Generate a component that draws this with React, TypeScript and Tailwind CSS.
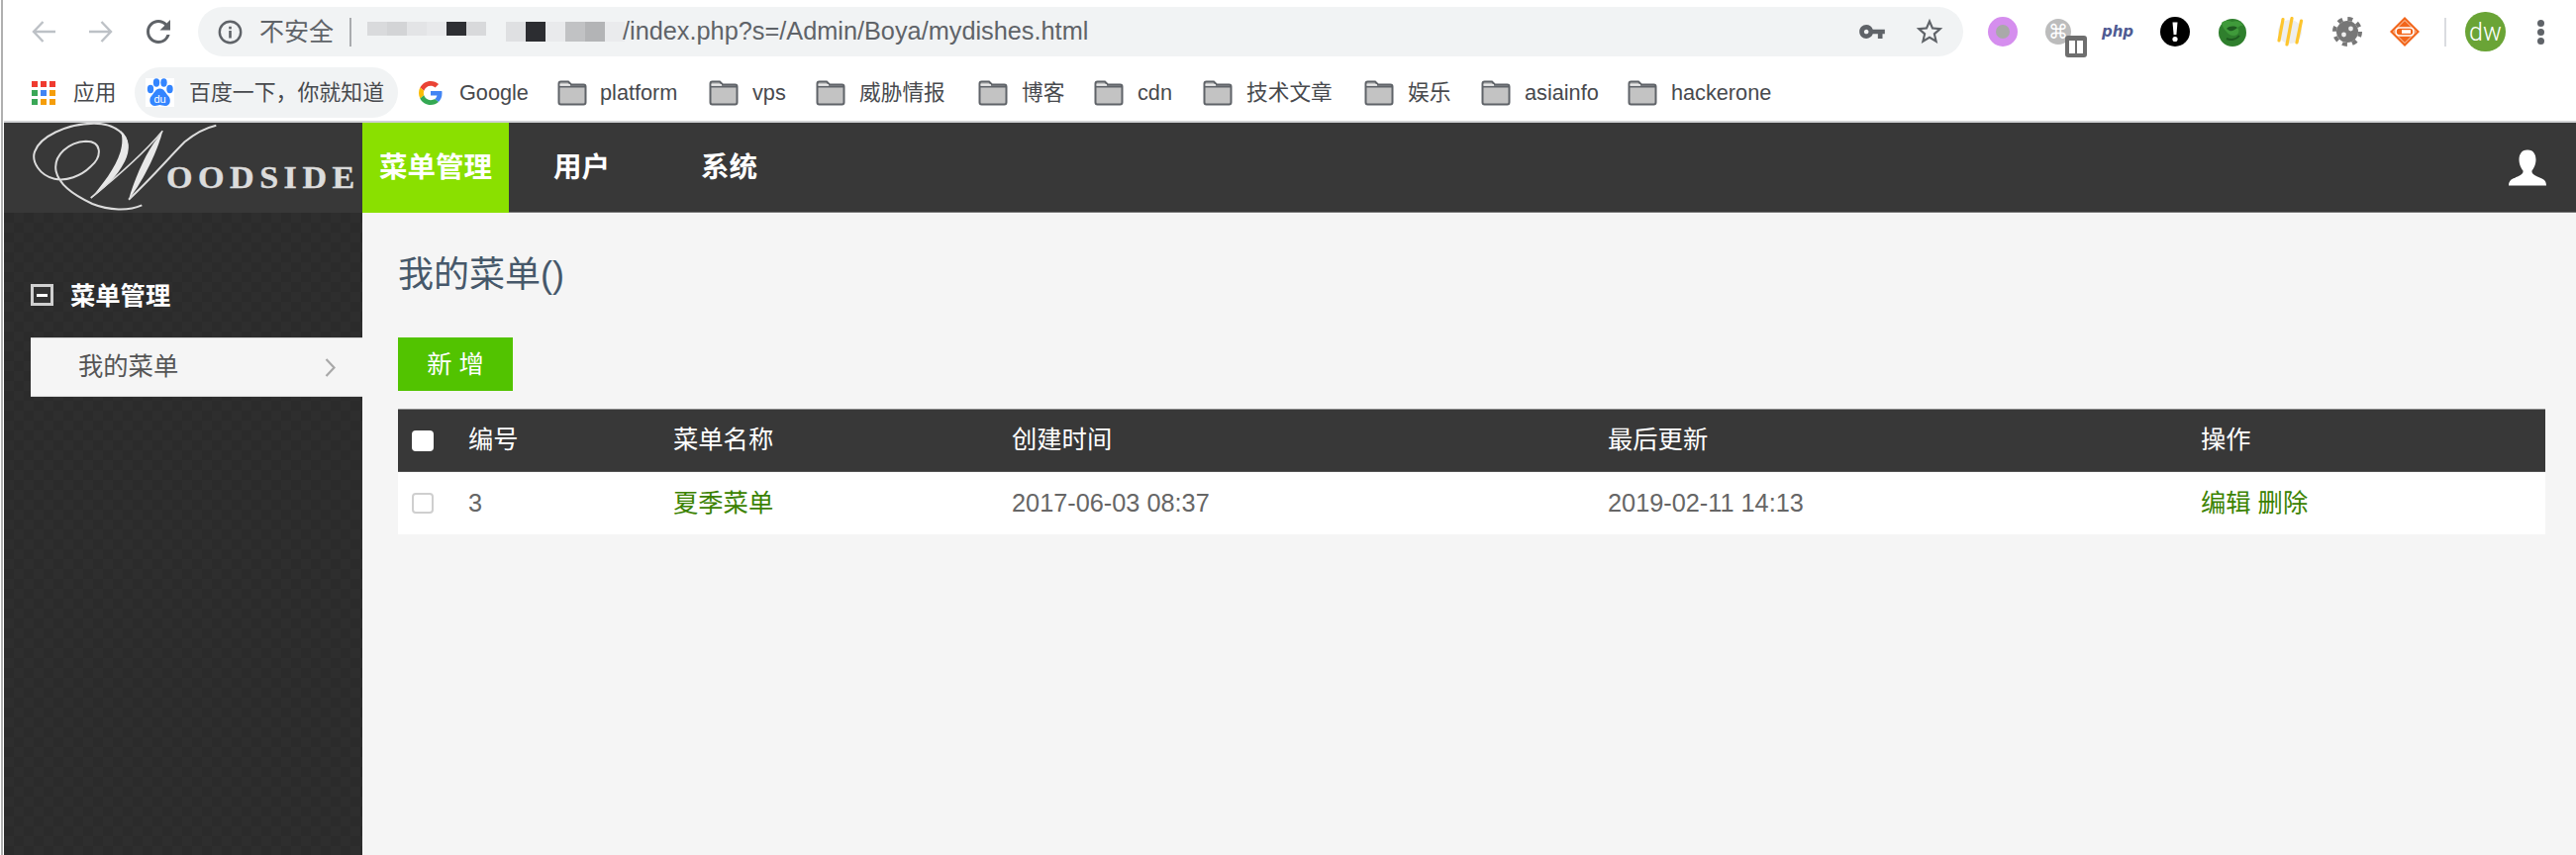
import React from "react";

const Folder = () => (
  <svg width="30" height="26" viewBox="0 0 30 26" className="shrink-0">
    <path d="M1.5 3.5Q1.5 1.5 3.5 1.5H11L14 4.5H26.5Q28.5 4.5 28.5 6.5V22.5Q28.5 24.5 26.5 24.5H3.5Q1.5 24.5 1.5 22.5Z" fill="#c3c3c3" stroke="#5f6368" strokeWidth="2" />
    <path d="M2 6.5H28" stroke="#5f6368" strokeWidth="2" fill="none" />
    <path d="M2.5 5H13" stroke="#f4f4f4" strokeWidth="1.5" fill="none" />
  </svg>
);

const AppsIcon = () => {
  const colors = ["#ef3b30", "#ef3b30", "#ef3b30", "#3aa757", "#4285f4", "#f59e0b", "#3aa757", "#f59e0b", "#f59e0b"];
  return (
    <div className="grid w-[24px] shrink-0 grid-cols-[6px_6px_6px] gap-[3px]">
      {colors.map((c, i) => (
        <div key={i} className="h-[6px] w-[6px]" style={{ backgroundColor: c }} />
      ))}
    </div>
  );
};

const BaiduIcon = () => (
  <div className="flex h-[29px] w-[29px] shrink-0 items-center justify-center bg-white">
    <svg width="27" height="29" viewBox="0 0 27 29">
      <ellipse cx="4" cy="11" rx="3.2" ry="4.2" fill="#3385ff" />
      <ellipse cx="10" cy="4.5" rx="3.2" ry="4.2" fill="#3385ff" />
      <ellipse cx="17.5" cy="4.5" rx="3.2" ry="4.2" fill="#3385ff" />
      <ellipse cx="23.5" cy="11" rx="3.2" ry="4.2" fill="#3385ff" />
      <path d="M13.5 10.5C9 10.5 8 15 5 18C2 21 3 28 8.5 28C11 28 12 27 13.5 27C15 27 16.5 28 19 28C24.5 28 25 21 22 18C19 15 18 10.5 13.5 10.5Z" fill="#3385ff" />
      <text x="13.5" y="24.5" textAnchor="middle" fontSize="11" fill="#fff" fontFamily="Liberation Sans, sans-serif">du</text>
    </svg>
  </div>
);

const GoogleIcon = () => (
  <svg width="24" height="24" viewBox="0 0 48 48" className="shrink-0">
    <path fill="#EA4335" d="M24 9.5c3.5 0 6.7 1.2 9.2 3.6l6.9-6.9C35.9 2.4 30.5 0 24 0 14.6 0 6.5 5.4 2.6 13.2l8 6.2C12.4 13.7 17.7 9.5 24 9.5z" />
    <path fill="#4285F4" d="M47 24.5c0-1.6-.1-3.1-.4-4.5H24v9h12.9c-.6 3-2.2 5.5-4.7 7.2l7.7 6C44.4 38 47 31.8 47 24.5z" />
    <path fill="#FBBC05" d="M10.5 28.6c-.5-1.4-.8-3-.8-4.6s.3-3.2.8-4.6l-8-6.2C.9 16.5 0 20.1 0 24s.9 7.5 2.6 10.8l7.9-6.2z" />
    <path fill="#34A853" d="M24 48c6.5 0 11.9-2.1 15.9-5.8l-7.7-6c-2.2 1.4-4.9 2.3-8.2 2.3-6.3 0-11.6-4.2-13.5-9.9l-7.9 6.2C6.5 42.6 14.6 48 24 48z" />
  </svg>
);

const WoodsideLogo = () => (
  <svg width="362" height="91" viewBox="0 0 362 91" className="shrink-0">
    <g transform="translate(16,-4) scale(0.3333)" fill="none" stroke="#dcdcdc" strokeWidth="6">
      <path d="M370,262 C330,280 270,278 220,258 C170,235 120,205 110,160 C100,110 150,70 200,68 C250,68 250,115 215,145 C185,175 140,190 105,182 C60,172 35,130 45,100 C60,55 140,15 225,14 C290,14 330,50 325,90" />
      <path d="M305,35 C335,60 335,95 318,130 C295,175 255,215 215,242 C250,200 290,150 305,100 C312,75 312,55 305,35 Z" fill="#e8e8e8" stroke="none" />
      <path d="M215,240 C290,180 380,100 433,37" strokeWidth="5" />
      <path d="M433,37 C420,90 380,180 330,245 C345,190 375,120 405,75 Z" fill="#e8e8e8" stroke="none" />
      <path d="M330,245 C400,180 450,120 500,70 C530,45 560,28 595,20" strokeWidth="6" />
    </g>
    <text transform="translate(164,66) scale(1.1,1)" fontSize="31" letterSpacing="5" fill="#dcdcdc" stroke="#dcdcdc" strokeWidth="0.4" fontFamily="Liberation Serif, serif">OODSIDE</text>
  </svg>
);

const ExtSlot = ({ children }: { children: React.ReactNode }) => (
  <div className="relative flex h-[30px] w-[58px] shrink-0 items-center justify-center">{children}</div>
);

const bookmarks = [
  { label: "vps", w: "w-[35px]" },
  { label: "威胁情报", w: "w-[91px]" },
  { label: "博客", w: "w-[44px]" },
  { label: "cdn", w: "w-[37px]" },
  { label: "技术文章", w: "w-[90px]" },
  { label: "娱乐", w: "w-[45px]" },
  { label: "asiainfo", w: "w-[75px]" },
  { label: "hackerone", w: "w-[101px]" },
];

const mosaicA = ["bg-[#d9dadc]", "bg-[#d3d4d6]", "bg-[#e3e4e6]", "bg-[#e8e9eb]", "bg-[#2e2f33]", "bg-[#d8d9db]"];
const mosaicB = ["bg-[#dfe0e2]", "bg-[#2c2d31]", "bg-[#e9eaec]", "bg-[#c1c2c4]", "bg-[#b3b4b6]", "bg-[#eaebed]"];

export default function App() {
  return (
    <div className="flex h-[864px] w-[2602px] overflow-hidden bg-white font-['Liberation_Sans','Noto_Sans_CJK_SC',sans-serif]">
      <div className="w-[4px] shrink-0 bg-white">
        <div className="ml-[1px] h-full w-[2px] bg-[#b0b0b0]" />
      </div>
      <div className="flex min-w-0 flex-1 flex-col">
        {/* browser toolbar */}
        <div className="flex h-[62px] shrink-0 items-start pl-[28px] pt-[7px]">
          <div className="flex h-[50px] w-[168px] shrink-0 items-center">
            <svg width="24" height="24" viewBox="0 0 24 24" fill="none" stroke="#bdc1c6" strokeWidth="2.4">
              <path d="M24 12H2M11.5 2L2 12l9.5 10" />
            </svg>
            <svg width="24" height="24" viewBox="0 0 24 24" fill="none" stroke="#bdc1c6" strokeWidth="2.4" className="ml-[34px]">
              <path d="M0 12H22M12.5 2L22 12l-9.5 10" />
            </svg>
            <svg width="36" height="36" viewBox="0 0 24 24" fill="#5f6368" className="ml-[28px]">
              <path d="M17.65 6.35A7.958 7.958 0 0 0 12 4c-4.42 0-7.99 3.58-7.99 8s3.57 8 7.99 8c3.73 0 6.84-2.55 7.73-6h-2.08A5.99 5.99 0 0 1 12 18c-3.31 0-6-2.69-6-6s2.69-6 6-6c1.66 0 3.14.69 4.22 1.78L13 11h7V4l-2.35 2.35z" />
            </svg>
          </div>
          <div className="flex h-[50px] w-[1783px] shrink-0 items-center rounded-full bg-[#f1f3f4] pl-[20px] pr-[18px]">
            <svg width="25" height="25" viewBox="0 0 25 25" fill="none" className="shrink-0">
              <circle cx="12.5" cy="12.5" r="10.7" stroke="#5f6368" strokeWidth="2.4" />
              <rect x="11.2" y="11" width="2.6" height="7.5" fill="#5f6368" />
              <rect x="11.2" y="6.8" width="2.6" height="2.6" fill="#5f6368" />
            </svg>
            <span className="ml-[17px] w-[76px] shrink-0 whitespace-nowrap text-[25px] leading-none text-[#5f6368]">不安全</span>
            <div className="ml-[15px] h-[29px] w-[2px] shrink-0 bg-[#a9abae]" />
            <div className="ml-[16px] flex h-[20px] w-[260px] shrink-0 items-start">
              <div className="flex h-[14px]">
                {mosaicA.map((c) => (
                  <div key={c} className={`h-full w-[20px] ${c}`} />
                ))}
              </div>
              <div className="ml-[20px] flex h-[20px]">
                {mosaicB.map((c) => (
                  <div key={c} className={`h-full w-[20px] ${c}`} />
                ))}
              </div>
            </div>
            <span className="-ml-[2px] whitespace-nowrap text-[25.3px] leading-none text-[#5f6368]">/index.php?s=/Admin/Boya/mydishes.html</span>
            <div className="flex-1" />
            <svg width="28" height="28" viewBox="0 0 24 24" fill="#5f6368" className="shrink-0">
              <path d="M12.65 10C11.83 7.67 9.61 6 7 6c-3.31 0-6 2.69-6 6s2.69 6 6 6c2.61 0 4.83-1.67 5.65-4H17v4h4v-4h2v-4H12.65zM7 14c-1.1 0-2-.9-2-2s.9-2 2-2 2 .9 2 2-.9 2-2 2z" />
            </svg>
            <svg width="32" height="32" viewBox="0 0 24 24" fill="#5f6368" className="ml-[28px] shrink-0">
              <path d="M22 9.24l-7.19-.62L12 2 9.19 8.63 2 9.24l5.46 4.73L5.82 21 12 17.27 18.18 21l-1.63-7.03L22 9.24zM12 15.4l-3.76 2.27 1-4.28-3.32-2.88 4.38-.38L12 6.1l1.71 4.04 4.38.38-3.32 2.88 1 4.28L12 15.4z" />
            </svg>
          </div>
          <div className="ml-[11px] flex h-[50px] shrink-0 items-center">
            <ExtSlot>
              <div className="flex h-[30px] w-[30px] items-center justify-center rounded-full bg-[#d58eee]">
                <div className="h-[14px] w-[14px] rounded-full bg-[#a9a9a9]" />
              </div>
            </ExtSlot>
            <ExtSlot>
              <div className="flex h-[26px] w-[26px] -translate-x-[2px] items-center justify-center rounded-full bg-[#bcbcbc] font-['DejaVu_Sans',sans-serif] text-[20px] leading-none text-white">⌘</div>
              <div className="absolute left-[34px] top-[19px] flex h-[22px] w-[22px] items-center justify-center gap-[2px] rounded-[3px] bg-[#6e6e6e]">
                <div className="h-[13px] w-[6px] bg-white" />
                <div className="h-[13px] w-[6px] bg-white" />
              </div>
            </ExtSlot>
            <ExtSlot>
              <span className="font-['DejaVu_Sans',sans-serif] text-[15px] font-bold italic leading-none text-[#4f5b93]">php</span>
            </ExtSlot>
            <ExtSlot>
              <svg width="30" height="30" viewBox="0 0 30 30">
                <circle cx="15" cy="15" r="15" fill="#000" />
                <path d="M12.5 5.5h5L16.4 18h-2.8z" fill="#fff" />
                <circle cx="15" cy="22.5" r="2.6" fill="#fff" />
              </svg>
            </ExtSlot>
            <ExtSlot>
              <svg width="30" height="30" viewBox="0 0 30 30">
                <circle cx="15" cy="16" r="14" fill="#2f7f2d" />
                <path d="M4 6C7 3 12 4 15 5C19 3 24 5 26 9C23 8 22 10 20 11C23 14 21 19 16 19C12 19 10 16 8 14C6 12 5 10 4 6Z" fill="#3f9a3a" />
                <path d="M9 12C12 9 17 9 20 11C17 13 15 15 12 14Z" fill="#1e5a20" />
                <path d="M9 22C13 24 19 23 22 19" stroke="#1e5a20" strokeWidth="2" fill="none" />
              </svg>
            </ExtSlot>
            <ExtSlot>
              <svg width="26" height="30" viewBox="0 0 26 30">
                <circle cx="13" cy="15" r="12" fill="#eeeeee" />
                <path d="M6 2.5L2 24" stroke="#fdc52e" strokeWidth="3.2" strokeLinecap="round" />
                <path d="M15 1.5L10 28" stroke="#fdc52e" strokeWidth="3.2" strokeLinecap="round" />
                <path d="M24.5 4L20 26" stroke="#fdc52e" strokeWidth="3.2" strokeLinecap="round" />
              </svg>
            </ExtSlot>
            <ExtSlot>
              <svg width="30" height="30" viewBox="0 0 30 30">
                <circle cx="15" cy="15" r="11" fill="#777" />
                <circle cx="15" cy="15" r="13" fill="none" stroke="#777" strokeWidth="4" strokeDasharray="5 5.2" />
                <circle cx="11.5" cy="18" r="2.4" fill="#eee" />
                <circle cx="18.5" cy="12" r="2.4" fill="#eee" />
              </svg>
            </ExtSlot>
            <ExtSlot>
              <svg width="30" height="30" viewBox="0 0 30 30">
                <path d="M15 0L30 15L15 30L0 15Z" fill="#f2651a" />
                <path d="M15 3.5L26.5 15L15 26.5L3.5 15Z" fill="none" stroke="#fbd6bd" strokeWidth="1" />
                <rect x="6" y="11" width="18" height="8" rx="4" fill="none" stroke="#fff" strokeWidth="1.6" />
                <rect x="12" y="13.2" width="9" height="3.6" fill="#fff" />
              </svg>
            </ExtSlot>
            <div className="ml-[11px] h-[29px] w-[2px] bg-[#dadce0]" />
            <div className="ml-[19px] flex h-[40px] w-[41px] items-center justify-center rounded-full bg-[#6aa436] font-['Roboto',sans-serif] text-[25px] font-light leading-none text-white">dw</div>
            <div className="ml-[32px] flex flex-col gap-[2px]">
              <div className="h-[7px] w-[7px] rounded-full bg-[#5f6368]" />
              <div className="h-[7px] w-[7px] rounded-full bg-[#5f6368]" />
              <div className="h-[7px] w-[7px] rounded-full bg-[#5f6368]" />
            </div>
          </div>
        </div>
        {/* bookmarks bar */}
        <div className="flex h-[62px] shrink-0 items-center border-b-2 border-[#d2d3d5] pl-[28px] pt-[3px] text-[21.7px] leading-none text-[#47494d]">
          <AppsIcon />
          <span className="ml-[18px] w-[41px] whitespace-nowrap">应用</span>
          <div className="ml-[21px] flex h-[51px] w-[266px] shrink-0 items-center rounded-full bg-[#f1f3f4] pl-[11px]">
            <BaiduIcon />
            <span className="ml-[15px] whitespace-nowrap text-[21.9px]">百度一下，你就知道</span>
          </div>
          <div className="ml-[21px]"><GoogleIcon /></div>
          <span className="ml-[17px] w-[70px] whitespace-nowrap">Google</span>
          <div className="ml-[29px]"><Folder /></div>
          <span className="ml-[13px] w-[81px] whitespace-nowrap">platform</span>
          {bookmarks.map((b) => (
            <div key={b.label} className="ml-[29px] flex items-center gap-[14px]">
              <Folder />
              <span className={`${b.w} whitespace-nowrap`}>{b.label}</span>
            </div>
          ))}
        </div>
        {/* site header */}
        <div className="flex h-[91px] shrink-0 bg-[#383838] text-[28.5px] font-bold leading-none text-white">
          <WoodsideLogo />
          <div className="flex w-[148px] items-center justify-center bg-[#8ae000]">菜单管理</div>
          <div className="flex w-[149px] items-center justify-center border-b border-[#777] pr-[2px]">用户</div>
          <div className="flex w-[149px] items-center justify-center border-b border-[#777] pr-[2px]">系统</div>
          <div className="flex flex-1 items-center justify-end border-b border-[#777] pr-[30px]">
            <svg width="38" height="37" viewBox="0 0 38 36" fill="#fff">
              <path d="M19 0C12.5 0 10.5 5 10.5 10C10.5 15 13 19 14.5 21C15 24 13 25 9 27C4 29 0 30 0 36H38C38 30 34 29 29 27C25 25 23 24 23.5 21C25 19 27.5 15 27.5 10C27.5 5 25.5 0 19 0Z" />
            </svg>
          </div>
        </div>
        {/* body */}
        <div className="flex min-h-0 flex-1">
          <div className="w-[362px] shrink-0 bg-[#2c2c2c] bg-[repeating-conic-gradient(#2e2e2e_0%_25%,#2b2b2b_0%_50%)] bg-[length:20px_20px] pl-[27px] pt-[72px]">
            <div className="flex h-[22px] items-center">
              <div className="flex h-[22px] w-[23px] items-center justify-center border-[3px] border-[#d0d0d0] bg-[#333]">
                <div className="h-[3px] w-[11px] bg-white" />
              </div>
              <span className="ml-[17px] mt-[3px] whitespace-nowrap text-[25.3px] font-bold leading-none text-white">菜单管理</span>
            </div>
            <div className="mt-[32px] flex h-[60px] items-center justify-between border-y border-[#d8d8d8] bg-[#f5f5f5] pl-[48px] pr-[27px] text-[25.3px] leading-none text-[#555]">
              <span>我的菜单</span>
              <svg width="11" height="19" viewBox="0 0 11 19" fill="none" stroke="#a8a8a8" strokeWidth="2.2">
                <path d="M1.5 1L9.5 9.5L1.5 18" />
              </svg>
            </div>
          </div>
          <div className="min-w-0 flex-1 bg-[#f5f5f5] pl-[36px] pr-[31px] pt-[40px]">
            <h1 className="h-[46px] whitespace-nowrap text-[36px] font-normal leading-[46px] text-[#46586a]">我的菜单()</h1>
            <button className="mt-[40px] flex h-[54px] w-[116px] items-center justify-center bg-[#52c300] pt-[2px] text-[25.3px] leading-none text-white">新 增</button>
            <div className="mt-[18px] grid h-[64px] grid-cols-[71px_207px_342px_602px_599px_1fr] items-center border-y border-t-[#8e8e8e] border-b-[#555] bg-[#383838] text-[25.3px] leading-none text-white">
              <div className="pl-[14px]">
                <div className="h-[21px] w-[22px] rounded-[4px] bg-white" />
              </div>
              <div>编号</div>
              <div>菜单名称</div>
              <div>创建时间</div>
              <div>最后更新</div>
              <div>操作</div>
            </div>
            <div className="grid h-[63px] grid-cols-[71px_207px_342px_602px_599px_1fr] items-center bg-white text-[25.3px] leading-none text-[#666]">
              <div className="pl-[14px]">
                <div className="h-[21px] w-[22px] rounded-[4px] border-2 border-[#cfcfcf] bg-white" />
              </div>
              <div>3</div>
              <div className="text-[#3b8200]">夏季菜单</div>
              <div>2017-06-03 08:37</div>
              <div>2019-02-11 14:13</div>
              <div className="text-[#3b8200]">编辑 删除</div>
            </div>
          </div>
        </div>
      </div>
    </div>
  );
}
